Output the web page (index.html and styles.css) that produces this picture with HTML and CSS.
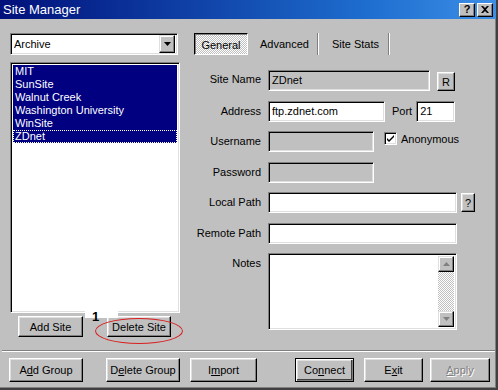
FILE: index.html
```html
<!DOCTYPE html>
<html lang="en">
<head>
    <meta charset="UTF-8">
    <title>Site Manager</title>
    <link rel="stylesheet" href="styles.css">
</head>
<body>
<div class="window">
    <div class="titlebar">
        <span class="title">Site Manager</span>
        <div class="title-btns">
            <button class="tbtn help">?</button>
            <button class="tbtn"><svg width="8" height="7" viewBox="0 0 8 7"><path d="M0 0h2l2 2 2-2h2L5 3.5 8 7H6L4 5 2 7H0l3-3.5z" fill="#000"/></svg></button>
        </div>
    </div>

    <div class="main">
        <div class="left">
            <div class="combo">
                <span class="combo-text">Archive</span>
                <span class="combo-arrow"><svg width="7" height="4" viewBox="0 0 7 4"><path d="M0 0h7L3.5 4z" fill="#000"/></svg></span>
            </div>
            <ul class="sites">
                <li class="sel">MIT</li>
                <li class="sel">SunSite</li>
                <li class="sel">Walnut Creek</li>
                <li class="sel">Washington University</li>
                <li class="sel">WinSite</li>
                <li class="sel focus">ZDnet</li>
            </ul>
            <div class="site-btns">
                <button class="btn add-site">Add Site</button>
                <button class="btn del-site">Delete Site</button>
                <span class="mark">1</span>
                <span class="ring"></span>
            </div>
        </div>

        <div class="right">
            <div class="tabs">
                <span class="tab active">General</span>
                <span class="tab">Advanced</span>
                <span class="tab">Site Stats</span>
            </div>

            <div class="form">
                <label>Site Name</label>
                <div class="cell">
                    <span class="field off w-name">ZDnet</span>
                    <button class="btn small r-btn">R</button>
                </div>

                <label>Address</label>
                <div class="cell">
                    <span class="field w-addr">ftp.zdnet.com</span>
                    <span class="port-label">Port</span>
                    <span class="field w-port">21</span>
                </div>

                <label>Username</label>
                <div class="cell">
                    <span class="field off w-user"></span>
                    <span class="check"><svg width="9" height="9" viewBox="0 0 9 9"><path d="M1 4l2 2 5-5v2L3 8 1 6z" fill="#000"/></svg></span>
                    <span class="check-label">Anonymous</span>
                </div>

                <label>Password</label>
                <div class="cell">
                    <span class="field off w-user"></span>
                </div>

                <label>Local Path</label>
                <div class="cell">
                    <span class="field w-path"></span>
                    <button class="btn small q-btn">?</button>
                </div>

                <label>Remote Path</label>
                <div class="cell">
                    <span class="field w-path"></span>
                </div>

                <label>Notes</label>
                <div class="cell">
                    <div class="field notes">
                        <div class="notes-text"></div>
                        <div class="scrollbar">
                            <span class="sbtn"><svg width="7" height="4" viewBox="0 0 7 4"><path d="M0 4h7L3.5 0z" fill="#808080"/></svg></span>
                            <span class="track"></span>
                            <span class="sbtn"><svg width="7" height="4" viewBox="0 0 7 4"><path d="M0 0h7L3.5 4z" fill="#808080"/></svg></span>
                        </div>
                    </div>
                </div>
            </div>
        </div>
    </div>

    <div class="footer">
        <button class="btn fb w74">A<u>d</u>d Group</button>
        <button class="btn fb w74 gap-l">D<u>e</u>lete Group</button>
        <button class="btn fb w67 gap-s">I<u>m</u>port</button>
        <button class="btn fb w59 default">Co<u>n</u>nect</button>
        <button class="btn fb w59 gap-s">E<u>x</u>it</button>
        <button class="btn fb w60 gap-xs disabled"><u>A</u>pply</button>
    </div>
</div>
</body>
</html>
```

FILE: styles.css
```css
body {
    margin: 0;
    background: #c0c0c0;
    font-family: "Liberation Sans", Arial, sans-serif;
    font-size: 11px;
    color: #000;
}
.window {
    width: 498px;
    height: 390px;
    box-sizing: border-box;
    display: flex;
    flex-direction: column;
    background: #c0c0c0;
    border-right: 2px solid #404040;
    border-bottom: 2px solid #404040;
    box-shadow: inset -1px -1px #808080;
}
.titlebar {
    height: 19px;
    display: flex;
    align-items: center;
    justify-content: space-between;
    background: linear-gradient(to right, #00107a, #1e6fd0 75%, #3c8ee6);
    color: #fff;
}
.title {
    font-size: 13px;
    padding-left: 3px;
}
.title-btns {
    display: flex;
    gap: 2px;
    margin-right: 3px;
}
.tbtn {
    width: 16px;
    height: 14px;
    padding: 0;
    display: flex;
    align-items: center;
    justify-content: center;
    background: #c0c0c0;
    border: 1px solid;
    border-color: #fff #000 #000 #fff;
    box-shadow: inset -1px -1px #808080;
    font-family: inherit;
    font-size: 11px;
    font-weight: bold;
    line-height: 1;
}
.btn {
    background: #c0c0c0;
    border: 1px solid;
    border-color: #fff #000 #000 #fff;
    box-shadow: inset -1px -1px #808080, inset 1px 1px #dfdfdf;
    font-family: inherit;
    font-size: 11px;
    color: #000;
    padding: 0;
}
.field {
    display: block;
    box-sizing: border-box;
    height: 21px;
    background: #fff;
    border: 1px solid;
    border-color: #808080 #fff #fff #808080;
    box-shadow: inset 1px 1px #000, inset -1px -1px #dfdfdf;
    padding: 0 3px;
    line-height: 19px;
}
.field.off {
    background: #c0c0c0;
}

.main {
    flex: 1;
    display: flex;
    padding-top: 14px;
}
.left {
    margin-left: 10px;
    width: 170px;
}
.combo {
    width: 168px;
    height: 22px;
    box-sizing: border-box;
    display: flex;
    align-items: center;
    background: #fff;
    border: 1px solid;
    border-color: #808080 #fff #fff #808080;
    box-shadow: inset 1px 1px #000, inset -1px -1px #dfdfdf;
    padding: 2px;
}
.combo-text {
    flex: 1;
    padding-left: 1px;
}
.combo-arrow {
    width: 16px;
    height: 18px;
    box-sizing: border-box;
    display: flex;
    align-items: center;
    justify-content: center;
    border: 1px solid;
    border-color: #dfdfdf #000 #000 #dfdfdf;
    box-shadow: inset -1px -1px #808080, inset 1px 1px #fff;
    background: #c0c0c0;
}
.sites {
    list-style: none;
    margin: 7px 0 0;
    padding: 2px;
    height: 251px;
    box-sizing: border-box;
    background: #fff;
    border: 1px solid;
    border-color: #808080 #fff #fff #808080;
    box-shadow: inset 1px 1px #000, inset -1px -1px #dfdfdf;
}
.sites li {
    height: 13px;
    line-height: 13px;
    padding-left: 2px;
}
.sites li.sel {
    background: #000080;
    color: #fff;
}
.sites li.focus {
    outline: 1px dotted #fff;
    outline-offset: -1px;
}
.site-btns {
    position: relative;
    display: flex;
    margin-top: 3px;
}
.add-site {
    width: 65px;
    height: 21px;
    margin-left: 8px;
}
.del-site {
    width: 64px;
    height: 21px;
    margin-left: 24px;
}
.mark {
    position: absolute;
    left: 75px;
    top: -6px;
    width: 33px;
    height: 8px;
    background: #fff;
    font-weight: bold;
    font-size: 13px;
    line-height: 14px;
    padding-left: 7px;
    box-sizing: border-box;
}
.ring {
    position: absolute;
    left: 85px;
    top: 2px;
    width: 86px;
    height: 24px;
    border: 1px solid #d82020;
    border-radius: 50%;
}

.right {
    margin-left: 14px;
}
.tabs {
    display: flex;
    height: 22px;
}
.tab {
    display: flex;
    align-items: center;
    padding: 0 8px 0 12px;
    border-right: 1px solid #808080;
    box-shadow: 1px 0 #fff;
}
.tab.active {
    width: 54px;
    box-sizing: border-box;
    justify-content: center;
    padding: 1px 0 0;
    border: 1px solid;
    border-color: #000 #fff #fff #000;
    box-shadow: inset 1px 1px #808080;
    background: repeating-conic-gradient(#fff 0 25%, #c0c0c0 0 50%) 0 0 / 2px 2px;
}
.tab:last-child {
    margin-left: 2px;
    padding-right: 9px;
}
.form {
    display: grid;
    grid-template-columns: 67px auto;
    column-gap: 7px;
    row-gap: 9.5px;
    margin-top: 14px;
}
.form label {
    text-align: right;
    line-height: 21px;
}
.cell {
    display: flex;
    align-items: center;
}
.w-name { width: 162px; }
.w-addr { width: 117px; }
.w-port { width: 39px; }
.w-user { width: 106px; }
.w-path { width: 189px; }
.small {
    height: 19px;
}
.r-btn {
    width: 18px;
    margin-left: 7px;
    margin-top: 3px;
}
.q-btn {
    width: 14px;
    margin-left: 4px;
}
.port-label {
    margin: 0 4px 0 7px;
}
.check {
    align-self: flex-start;
    margin: 1px 0 0 10px;
    width: 13px;
    height: 13px;
    box-sizing: border-box;
    display: flex;
    align-items: center;
    justify-content: center;
    background: #fff;
    border: 1px solid;
    border-color: #808080 #fff #fff #808080;
    box-shadow: inset 1px 1px #000, inset -1px -1px #dfdfdf;
}
.check-label {
    align-self: flex-start;
    margin: 2px 0 0 4px;
}
.notes {
    width: 189px;
    height: 77px;
    display: flex;
    padding: 2px;
}
.notes-text {
    flex: 1;
}
.scrollbar {
    width: 16px;
    display: flex;
    flex-direction: column;
}
.sbtn {
    height: 16px;
    box-sizing: border-box;
    display: flex;
    align-items: center;
    justify-content: center;
    background: #c0c0c0;
    border: 1px solid;
    border-color: #dfdfdf #000 #000 #dfdfdf;
    box-shadow: inset -1px -1px #808080, inset 1px 1px #fff;
}
.track {
    flex: 1;
    background: repeating-conic-gradient(#fff 0 25%, #c0c0c0 0 50%) 0 0 / 2px 2px;
}

.footer {
    display: flex;
    margin: 0 1px 0 2px;
    padding: 7px 0 6px 7px;
    border-top: 1px solid #808080;
    box-shadow: inset 0 1px #fff;
}
.fb {
    height: 24px;
}
.w74 { width: 74px; }
.w67 { width: 67px; }
.w59 { width: 59px; }
.w60 { width: 60px; }
.gap-l { margin-left: 23px; }
.gap-s { margin-left: 10px; }
.gap-xs { margin-left: 7px; }
.default {
    margin-left: 38px;
    border: 1px solid #000;
    box-shadow: inset 1px 1px #fff, inset -1px -1px #808080, inset -2px -2px #404040, inset 2px 2px #dfdfdf;
}
.disabled {
    color: #808080;
    text-shadow: 1px 1px #fff;
}
```
